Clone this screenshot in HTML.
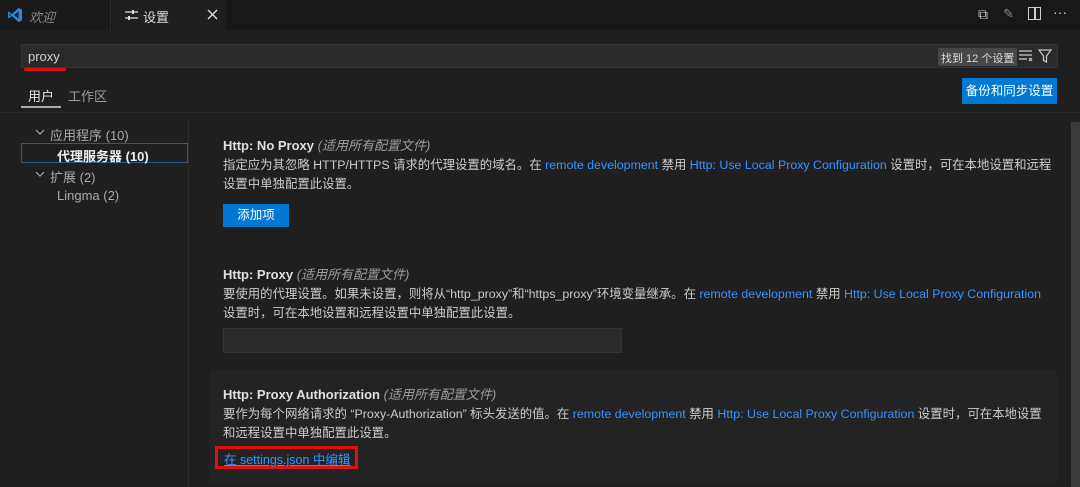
<!DOCTYPE html>
<html><head><meta charset="utf-8"><style>
*{margin:0;padding:0;box-sizing:border-box}
body{width:1080px;height:487px;background:#1f1f1f;font-family:"Liberation Sans","Noto Sans CJK SC",sans-serif;font-size:13px;color:#cccccc;position:relative;overflow:hidden}
.a{position:absolute;white-space:nowrap}
.link{color:#3794ff}
.t{font-weight:bold;color:#e0e0e0}
.i{font-style:italic;color:#9d9d9d}
.d{font-size:12.4px;line-height:19px}
</style></head><body>
<div class="a" style="left:0;top:0;width:1080px;height:30px;background:#181818"></div>
<div class="a" style="left:0;top:0;width:111px;height:30px;background:#1a1a1a;border-right:1px solid #2b2b2b"></div>
<svg class="a" style="left:7px;top:7px" width="16" height="16" viewBox="0 0 16 16"><path d="M11.5 1L5 7 2 4.6 1 5.2v5.6l1 .6L5 9l6.5 6L15 13.5v-11z M11.5 4.5v7L7 8z M2.5 6.3L4 8 2.5 9.7z" fill="#2a8ad4" fill-rule="evenodd"/></svg>
<div class="a i" style="left:29px;top:7px;color:#8b8b8b">欢迎</div>
<div class="a" style="left:112px;top:0;width:114px;height:31px;background:#1f1f1f"></div>
<svg class="a" style="left:125px;top:9px" width="13" height="12" viewBox="0 0 13 12"><path d="M0 3h13M0 9h13" stroke="#ddd" stroke-width="1.3"/><rect x="7" y="1" width="2" height="4" fill="#ddd"/><rect x="3" y="7" width="2" height="4" fill="#ddd"/></svg>
<div class="a" style="left:143px;top:7px;color:#ddd">设置</div>
<svg class="a" style="left:207px;top:9px" width="11" height="11" viewBox="0 0 11 11"><path d="M1 1L10 10M10 1L1 10" stroke="#ddd" stroke-width="1.4"/></svg>
<div class="a" style="left:978px;top:6px;color:#ccc;font-size:14px">⧉</div>
<div class="a" style="left:1003px;top:6px;color:#888;font-size:13px">✎</div>
<div class="a" style="left:1028px;top:7px;width:13px;height:13px;border:1.5px solid #ccc"></div>
<div class="a" style="left:1034px;top:7px;width:1.5px;height:13px;background:#ccc"></div>
<div class="a" style="left:1053px;top:4px;color:#ccc;font-size:14px">···</div>
<div class="a" style="left:21px;top:44px;width:1037px;height:24px;background:#2a2a2a;border:1px solid #333"></div>
<div class="a" style="left:28px;top:49px;color:#cfcfcf">proxy</div>
<div class="a" style="left:24px;top:68px;width:42px;height:3px;background:#e01010;border-radius:2px"></div>
<div class="a" style="left:938px;top:48px;height:18px;padding:2px 3px;background:#474747;color:#ddd;font-size:11px">找到 12 个设置</div>
<svg class="a" style="left:1019px;top:50px" width="14" height="12" viewBox="0 0 14 12"><path d="M0 1h13M0 5h13M0 9h8M10 8l3 3M13 8l-3 3" stroke="#ccc" stroke-width="1.2" fill="none"/></svg>
<svg class="a" style="left:1038px;top:49px" width="14" height="14" viewBox="0 0 14 14"><path d="M1 1h12L8.5 7v6L5.5 11.5V7z" stroke="#ccc" stroke-width="1.2" fill="none"/></svg>
<div class="a" style="left:28px;top:86px;color:#e7e7e7">用户</div>
<div class="a" style="left:68px;top:86px;color:#9d9d9d">工作区</div>
<div class="a" style="left:21px;top:106px;width:40px;height:2px;background:#aaa"></div>
<div class="a" style="left:962px;top:78px;width:95px;height:26px;background:#0078d4;color:#fff;font-size:12.5px;text-align:center;line-height:26px">备份和同步设置</div>
<div class="a" style="left:0;top:112px;width:1080px;height:1px;background:#2b2b2b"></div>
<svg class="a" style="left:35px;top:129px" width="10" height="6" viewBox="0 0 10 6"><path d="M1 1l4 4 4-4" stroke="#aaa" stroke-width="1.2" fill="none"/></svg>
<div class="a" style="left:50px;top:125px;color:#aaa">应用程序 (10)</div>
<div class="a" style="left:21px;top:143px;width:167px;height:20px;border:1px solid #2c5b85"></div>
<div class="a" style="left:57px;top:146px;color:#eee;font-weight:bold">代理服务器 (10)</div>
<svg class="a" style="left:35px;top:171px" width="10" height="6" viewBox="0 0 10 6"><path d="M1 1l4 4 4-4" stroke="#aaa" stroke-width="1.2" fill="none"/></svg>
<div class="a" style="left:50px;top:167px;color:#aaa">扩展 (2)</div>
<div class="a" style="left:57px;top:188px;color:#aaa">Lingma (2)</div>
<div class="a" style="left:188px;top:120px;width:1px;height:367px;background:#2b2b2b"></div>
<div class="a" style="left:1071px;top:122px;width:9px;height:365px;background:#3a3a3a"></div>
<div class="a" style="left:223px;top:135px"><span class="t">Http: No Proxy</span> <span class="i">(适用所有配置文件)</span></div>
<div class="a d" style="left:223px;top:156px">指定应为其忽略 HTTP/HTTPS 请求的代理设置的域名。在 <span class="link">remote development</span> 禁用 <span class="link">Http: Use Local Proxy Configuration</span> 设置时，可在本地设置和远程<br>设置中单独配置此设置。</div>
<div class="a" style="left:223px;top:204px;width:66px;height:23px;background:#0078d4;color:#fff;text-align:center;line-height:23px;font-size:12.5px">添加项</div>
<div class="a" style="left:223px;top:264px"><span class="t">Http: Proxy</span> <span class="i">(适用所有配置文件)</span></div>
<div class="a d" style="left:223px;top:285px">要使用的代理设置。如果未设置，则将从“http_proxy”和“https_proxy”环境变量继承。在 <span class="link">remote development</span> 禁用 <span class="link">Http: Use Local Proxy Configuration</span><br>设置时，可在本地设置和远程设置中单独配置此设置。</div>
<div class="a" style="left:223px;top:328px;width:399px;height:25px;background:#2a2a2a;border:1px solid #333"></div>
<div class="a" style="left:210px;top:370px;width:847px;height:113px;background:#232323"></div>
<div class="a" style="left:223px;top:384px"><span class="t">Http: Proxy Authorization</span> <span class="i">(适用所有配置文件)</span></div>
<div class="a d" style="left:223px;top:405px">要作为每个网络请求的 “Proxy-Authorization” 标头发送的值。在 <span class="link">remote development</span> 禁用 <span class="link">Http: Use Local Proxy Configuration</span> 设置时，可在本地设置<br>和远程设置中单独配置此设置。</div>
<div class="a" style="left:215px;top:446px;width:143px;height:23px;border:3px solid #e01010"></div>
<div class="a link" style="left:224px;top:449px;text-decoration:underline;font-size:12.5px">在 settings.json 中编辑</div>
</body></html>
